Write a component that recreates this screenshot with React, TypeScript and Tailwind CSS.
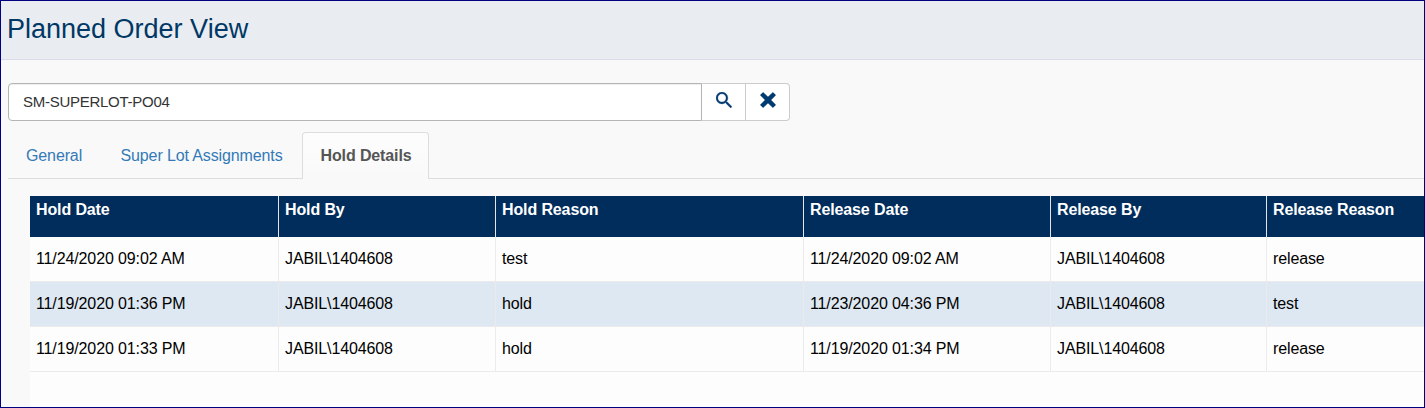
const columns = ["Hold Date", "Hold By", "Hold Reason", "Release Date", "Release By", "Release Reason"];

const rows = [
  ["11/24/2020 09:02 AM", "JABIL\\1404608", "test", "11/24/2020 09:02 AM", "JABIL\\1404608", "release"],
  ["11/19/2020 01:36 PM", "JABIL\\1404608", "hold", "11/23/2020 04:36 PM", "JABIL\\1404608", "test"],
  ["11/19/2020 01:33 PM", "JABIL\\1404608", "hold", "11/19/2020 01:34 PM", "JABIL\\1404608", "release"],
];

const grid = "grid grid-cols-[249px_217px_308px_247px_216px_1fr]";

function SearchIcon() {
  return (
    <svg viewBox="3 3 17.49 17.49" className="h-4 w-4" fill="currentColor" stroke="currentColor" strokeWidth="0.3" aria-hidden="true">
      <path d="M15.5 14h-.79l-.28-.27A6.471 6.471 0 0 0 16 9.5 6.5 6.5 0 1 0 9.5 16c1.61 0 3.09-.59 4.23-1.57l.27.28v.79l5 4.99L20.49 19l-4.99-5zm-6 0C7.01 14 5 11.99 5 9.5S7.01 5 9.5 5 14 7.01 14 9.5 11.99 14 9.5 14z" />
    </svg>
  );
}

function ClearIcon() {
  return (
    <svg viewBox="0 0 16 16" className="h-4 w-4" fill="currentColor" aria-hidden="true">
      <path d="M2.7.4Q3.1 0 3.5.4L8 4.8 12.5.4Q12.9 0 13.3.4L15.6 2.7Q16 3.1 15.6 3.5L11.1 8 15.6 12.5Q16 12.9 15.6 13.3L13.3 15.6Q12.9 16 12.5 15.6L8 11.2 3.5 15.6Q3.1 16 2.7 15.6L.4 13.3Q0 12.9.4 12.5L4.9 8 .4 3.5Q0 3.1.4 2.7Z" />
    </svg>
  );
}

export default function App() {
  return (
    <div className="flex h-[408px] w-[1425px] flex-col overflow-hidden border border-[#000080] bg-[#f9f9f9] font-['Liberation_Sans',Arial,sans-serif] text-base text-black">
      <header className="h-[59px] shrink-0 border-b border-[#d9dce8] bg-[#e9ecf1] pt-2 pl-1.5">
        <h1 className="text-[27px] leading-10 whitespace-nowrap text-[#003865]">Planned Order View</h1>
      </header>

      <div className="mt-[23px] ml-[7px] flex h-[38px] w-[782px] shrink-0 text-[#003a70]">
        <input
          aria-label="Planned order"
          defaultValue="SM-SUPERLOT-PO04"
          className="w-[694px] rounded-l border border-[#b5b5b5] bg-white px-3.5 text-[15px] tracking-[-0.27px] text-[#333] shadow-[inset_0_1px_1px_rgba(0,0,0,0.075)] outline-none"
        />
        <button aria-label="Search" className="flex w-11 justify-center border-y border-r border-[#ccc] bg-white pt-2">
          <SearchIcon />
        </button>
        <button aria-label="Clear" className="flex w-11 justify-center rounded-r border-y border-r border-[#ccc] bg-white pt-2">
          <ClearIcon />
        </button>
      </div>

      <nav className="mt-[11px] ml-[7px] flex h-[47px] shrink-0 border-b border-[#ddd] leading-[22px] tracking-[-0.12px] whitespace-nowrap text-[#337ab7]">
        <a className="w-[94px] pt-[13px] pl-[18px]">General</a>
        <a className="w-[200px] pt-[13px] pl-[18.5px]">Super Lot Assignments</a>
        <a className="h-[47px] w-[127px] rounded-t border border-b-0 border-[#ddd] bg-linear-to-b from-[#fdfdfd] to-[#f9f9f9] pt-3 pl-[17.5px] font-bold text-[#555]">
          Hold Details
        </a>
      </nav>

      <main className="mt-[17px] ml-[29px] flex-1 bg-[#fdfdfd] leading-[22px] tracking-[-0.12px] whitespace-nowrap">
        <div className={`${grid} h-[41px] bg-[#002d5c] font-bold text-white`}>
          {columns.map((c) => (
            <div key={c} className="border-r border-[#e5e5e5] pt-[3px] pl-1.5 last:border-r-0">{c}</div>
          ))}
        </div>
        {rows.map((r, i) => (
          <div key={i} className={`${grid} h-[45px] border-b border-[#ebebeb] even:bg-[#fdfdfd] odd:bg-[#dee8f2]`}>
            {r.map((v, j) => (
              <div key={j} className="border-r border-[#ebebeb] pt-[11px] pl-1.5 last:border-r-0">{v}</div>
            ))}
          </div>
        ))}
      </main>
    </div>
  );
}
